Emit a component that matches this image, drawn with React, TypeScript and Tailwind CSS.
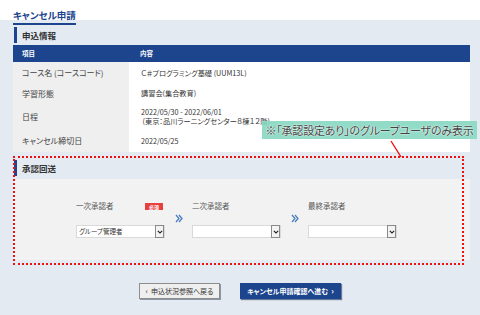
import type { ReactNode } from "react"

const rows = [
  { label: "コース名 (コースコード)", value: ["Ｃ＃プログラミング基礎 (UUM13L)"], h: "h-[22px]" },
  { label: "学習形態", value: ["講習会(集合教育)"], h: "h-[19px]" },
  {
    label: "日程",
    value: ["2022/05/30 - 2022/06/01", " (東京：品川ラーニングセンター８棟１２階)"],
    h: "h-[27px]",
  },
  { label: "キャンセル締切日", value: ["2022/05/25"], h: "h-[22px]" },
]

function SectionTitle({ children }: { children: ReactNode }) {
  return (
    <div className="flex h-[16px] items-center gap-[5px] pl-[1px]">
      <span className="h-full w-[3px] bg-[#1c458d]" />
      <span className="text-[8.5px] font-bold leading-none text-[#333]">{children}</span>
    </div>
  )
}

function Select({ value }: { value?: string }) {
  return (
    <div className="flex h-[13px] w-[89px] border border-[#d9d9d9] bg-white">
      <span className="flex-1 truncate pl-[2px] text-[6.5px] leading-[11px] text-[#333]">{value}</span>
      <span className="-my-px flex w-[9px] items-center justify-center border border-[#8a8a8a] bg-[#f3f3f3]">
        <svg width="6" height="4" viewBox="0 0 6 4">
          <path d="M0.8 0.8 L3 3 L5.2 0.8" fill="none" stroke="#222" strokeWidth="1.1" />
        </svg>
      </span>
    </div>
  )
}

function Approver({ label, required, value }: { label: string; required?: boolean; value?: string }) {
  return (
    <div className="flex w-[89px] flex-col">
      <div className="flex h-[10px] items-center justify-between">
        <span className="text-[7.5px] leading-none text-[#555]">{label}</span>
        {required && (
          <span className="mr-[2px] flex h-[7px] w-[18px] items-center justify-center bg-[#e8403f] text-[5px] font-bold leading-none text-white">
            必須
          </span>
        )}
      </div>
      <div className="mt-[14px]">
        <Select value={value} />
      </div>
    </div>
  )
}

function Arrow() {
  return (
    <div className="flex w-[27px] justify-center pt-[13px]">
      <svg width="8" height="9" viewBox="0 0 8 9">
        <path d="M1 1 L4 4.5 L1 8 M4 1 L7 4.5 L4 8" fill="none" stroke="#4b7fc1" strokeWidth="1.3" />
      </svg>
    </div>
  )
}

export default function App() {
  return (
    <div className="relative h-[315px] w-[480px] overflow-hidden bg-[#e3eaf2] font-['Noto_Sans_CJK_JP',sans-serif] [font-feature-settings:'palt']">
      <header className="h-[20px] bg-white pl-[13px]">
        <h1 className="inline-block h-[21px] border-b-2 border-[#1c458d] pt-[5px] text-[9.5px] font-bold leading-[12px] text-[#1c458d]">
          キャンセル申請
        </h1>
      </header>

      <main className="pl-[13px] pr-[10px]">
        <div className="mt-[7px]">
          <SectionTitle>申込情報</SectionTitle>
        </div>

        <div className="mt-[2px]">
          <div className="grid h-[17px] grid-cols-[116px_1fr] items-center bg-[#1c458d] text-[6.5px] font-bold text-white">
            <span className="pl-[9px]">項目</span>
            <span className="pl-[11px]">内容</span>
          </div>
          {rows.map((row) => (
            <div key={row.label} className={`grid grid-cols-[116px_1fr] ${row.h}`}>
              <div className="flex items-center bg-[#efefef] pl-[9px] text-[8px] text-[#444]">{row.label}</div>
              <div className="flex flex-col justify-center whitespace-pre bg-white pl-[12px] text-[7.2px] leading-[9px] text-[#333]">
                {row.value.map((v) => (
                  <span key={v}>{v}</span>
                ))}
              </div>
            </div>
          ))}
        </div>

        <div className="mt-[8px]">
          <SectionTitle>承認回送</SectionTitle>
        </div>

        <div className="mt-[3px] flex h-[81px] bg-[#f2f2f2] pl-[63px] pt-[22px]">
          <Approver label="一次承認者" required value="グループ管理者" />
          <Arrow />
          <Approver label="二次承認者" />
          <Arrow />
          <Approver label="最終承認者" />
        </div>

        <div className="mt-[23px] flex justify-center gap-[20px] pr-[3px]">
          <button className="flex h-[16px] w-[81px] items-center justify-center gap-[3px] border border-[#8d8d8d] bg-[#efefef] text-[7px] text-[#333] shadow-[1px_1px_0_#8a96a8]">
            <span className="text-[8px]">‹</span>申込状況参照へ戻る
          </button>
          <button className="flex h-[16px] w-[101px] items-center justify-center gap-[3px] bg-[#1c458d] text-[7px] font-bold text-white shadow-[1px_1px_1px_#6a7a96]">
            キャンセル申請確認へ進む<span className="text-[8px]">›</span>
          </button>
        </div>
      </main>

      {/* annotation overlay */}
      <div className="absolute left-[13px] top-[156px] h-[109px] w-[451px] border-2 border-dotted border-[#f01010]" />
      <svg className="absolute left-[388px] top-[139px]" width="16" height="20" viewBox="0 0 16 20">
        <path d="M3 2 L13 18" stroke="#f01010" strokeWidth="1.4" />
      </svg>
      <div className="absolute left-[262px] top-[121px] flex h-[18px] w-[215px] items-center justify-center whitespace-nowrap bg-[#86d8c1]/90 text-[11px] leading-none tracking-[-0.2px] text-[#444] [text-shadow:0_0_2px_#fff,0_0_1px_#fff]">
        ※「承認設定あり」のグループユーザのみ表示
      </div>
    </div>
  )
}
